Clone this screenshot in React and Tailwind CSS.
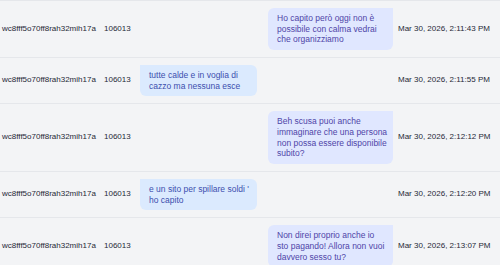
import React from "react";

const rows = [
  {
    id: "wc8fff5o70ff8rah32mih17a",
    user: "106013",
    side: "out",
    lines: ["Ho capito però oggi non è", "possibile con calma vedrai", "che organizziamo"],
    time: "Mar 30, 2026, 2:11:43 PM",
  },
  {
    id: "wc8fff5o70ff8rah32mih17a",
    user: "106013",
    side: "in",
    lines: ["tutte calde e in voglia di", "cazzo ma nessuna esce"],
    time: "Mar 30, 2026, 2:11:55 PM",
  },
  {
    id: "wc8fff5o70ff8rah32mih17a",
    user: "106013",
    side: "out",
    lines: [
      "Beh scusa puoi anche",
      "immaginare che una persona",
      "non possa essere disponibile",
      "subito?",
    ],
    time: "Mar 30, 2026, 2:12:12 PM",
  },
  {
    id: "wc8fff5o70ff8rah32mih17a",
    user: "106013",
    side: "in",
    lines: ["e un sito per spillare soldi '", "ho capito"],
    time: "Mar 30, 2026, 2:12:20 PM",
  },
  {
    id: "wc8fff5o70ff8rah32mih17a",
    user: "106013",
    side: "out",
    lines: ["Non direi proprio anche io", "sto pagando! Allora non vuoi", "davvero sesso tu?"],
    time: "Mar 30, 2026, 2:13:07 PM",
  },
];

const Bubble = ({ lines, side }) => (
  <div
    className={
      side === "in"
        ? "w-[117px] rounded-[6px] rounded-tl-none bg-[#dbeafe] px-[9px] py-[5px] text-[#3b4fae]"
        : "w-[125px] rounded-[6px] rounded-tr-none bg-[#e0e7ff] px-[9px] py-[5px] text-[#4f45a8]"
    }
  >
    {lines.map((l, i) => (
      <div key={i} className="whitespace-nowrap">
        {l}
      </div>
    ))}
  </div>
);

const App = () => {
  return (
    <div className="min-h-screen w-[500px] bg-[#f3f4f6] font-['Liberation_Sans',Arial,sans-serif] text-[8px] leading-[10.7px] text-[#1f2937] border-t border-[#e5e7eb]">
      {rows.map((row, i) => (
        <div
          key={i}
          className="flex items-center border-b border-[#e5e7eb] py-[7px]"
        >
          {/* SESSION */}
          <div className="w-[104px] shrink-0 pl-[2px]">{row.id}</div>

          {/* USER */}
          <div className="w-[36px] shrink-0">{row.user}</div>

          {/* MESSAGE */}
          <div className="flex flex-1 items-center justify-between text-[8.5px] leading-[10.67px]">
            {row.side === "in" ? <Bubble lines={row.lines} side="in" /> : <div />}
            {row.side === "out" ? <Bubble lines={row.lines} side="out" /> : <div />}
          </div>

          {/* TIME */}
          <div className="w-[107px] shrink-0 pl-[5px]">{row.time}</div>
        </div>
      ))}
    </div>
  );
};

export default App;
